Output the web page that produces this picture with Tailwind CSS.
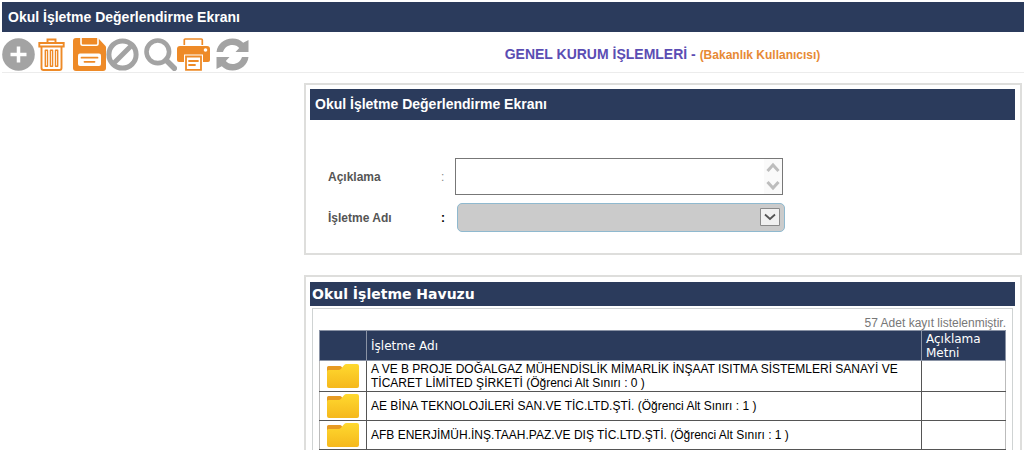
<!DOCTYPE html>
<html lang="tr">
<head>
<meta charset="utf-8">
<meta name="viewport" content="width=device-width, initial-scale=1">
<title>Okul İşletme Değerlendirme Ekranı</title>
<script src="https://cdn.jsdelivr.net/npm/@tailwindcss/browser@4"></script>
</head>
<body class="flex min-h-screen flex-col bg-white font-['Liberation_Sans',Arial,sans-serif] text-black">
<svg class="absolute size-0" aria-hidden="true">
  <linearGradient id="folder-fill" x1="0" y1="0" x2="0" y2="1">
    <stop offset="0" stop-color="#ffd92f"/><stop offset="1" stop-color="#f5b81c"/>
  </linearGradient>
  <symbol id="folder" viewBox="0 0 32 24">
    <path fill="#e79a22" d="M1.500 2H13q1 0 1.500.8L16 5v6H0V3.500Q0 2 1.500 2Z"/>
    <path fill="url(#folder-fill)" d="M0 7.500Q0 6 1.500 6H11.500q1.500 0 2.500-1.200L17 1.300Q18 0 19.500 0H30q2 0 2 2v20q0 2-2 2H2q-2 0-2-2Z"/>
  </symbol>
</svg>

<header class="mt-[2px] ml-[2px] flex h-[30px] items-center bg-[#2b3b5c] pl-[6px]">
  <h1 class="text-[14px] font-bold text-white">Okul İşletme Değerlendirme Ekranı</h1>
</header>

<div class="ml-[2px] flex h-[41px] items-center border-b border-[#ececec]">
  <div class="flex w-[302px] shrink-0 items-center pt-[4px]" role="toolbar" aria-label="İşlemler">
    <button type="button" aria-label="Yeni" class="mr-[3px]">
      <svg class="size-[33px]" viewBox="0 0 33 33"><circle cx="16.500" cy="16.500" r="16.300" fill="#a3a3a3"/><path d="M16.500 8.500v16M8.500 16.500h16" stroke="#fff" stroke-width="3.500"/></svg>
    </button>
    <button type="button" aria-label="Sil" class="mr-[8px]">
      <svg class="h-[33px] w-[27px]" viewBox="0 0 27 33" fill="none" stroke="#ee8a27"><path stroke-width="1.900" d="M9.500 5V1.500h8V5M1.300 5h24.400v3.500H1.300ZM3.500 8.500h20V30q0 2-2 2h-16q-2 0-2-2Z"/><path stroke-width="1.400" stroke-linejoin="round" d="M7.300 12.200h2.200v16H7.300ZM12.400 12.200h2.200v16h-2.200ZM17.500 12.200h2.200v16h-2.200Z"/></svg>
    </button>
    <button type="button" aria-label="Kaydet">
      <svg class="size-[33px]" viewBox="0 0 33 33"><path fill="#ee8a27" d="M3 0h22l8 8.500V30q0 3-3 3H3q-3 0-3-3V3q0-3 3-3Z"/><path fill="none" stroke="#fff" stroke-width="1.600" d="M8 0v5.500q0 1.700 1.700 1.700h13.600Q25 7.200 25 5.500V0"/><rect x="5" y="15.500" width="23" height="12.500" rx="2" fill="#fff"/><path d="M8.500 19.700h16M11.500 23.800h10" stroke="#ee8a27" stroke-width="1.800" stroke-linecap="round"/></svg>
    </button>
    <button type="button" aria-label="İptal" class="mr-[5px]">
      <svg class="size-[33px]" viewBox="0 0 33 33" fill="none" stroke="#a3a3a3" stroke-width="5"><circle cx="16.500" cy="16.500" r="13.600"/><path d="M26 7 7 26"/></svg>
    </button>
    <button type="button" aria-label="Ara">
      <svg class="size-[33px]" viewBox="0 0 33 33" fill="none" stroke="#a3a3a3"><circle cx="13.800" cy="13.800" r="11.300" stroke-width="4.600"/><path d="m22 22 8.300 8.300" stroke-width="5.500" stroke-linecap="round"/></svg>
    </button>
    <button type="button" aria-label="Yazdır" class="mr-[6px]">
      <svg class="size-[33px]" viewBox="0 0 33 33"><path fill="none" stroke="#ee8a27" stroke-width="1.700" d="M7.300 7V2q0-1 1-1h16q1 0 1 1v5"/><path fill="#ee8a27" d="M3 8h27q3 0 3 3v11q0 2-2 2H2q-2 0-2-2V11q0-3 3-3Z"/><circle cx="28.500" cy="12" r="1.800" fill="#fff"/><path fill="#fff" d="M7 16.500h19V33H7Z"/><path fill="none" stroke="#ee8a27" stroke-width="1.800" d="M9 18.500h15v13.300H9Z"/><path d="M12 23h9M12 27h6" stroke="#ee8a27" stroke-width="1.800" stroke-linecap="round"/></svg>
    </button>
    <button type="button" aria-label="Yenile">
      <svg class="size-[33px]" viewBox="0 0 33 33"><g fill="#a3a3a3"><path d="M.5 14C1.500 6 8 .5 16.500.5c4.500 0 8 1.500 10.700 4.300L32.500 2V14H19.500l3.700-4C21.500 8 19.500 7 16.500 7 12 7 8.500 9.500 7 14Z"/><path transform="rotate(180 16.500 16.500)" d="M.5 14C1.500 6 8 .5 16.500.5c4.500 0 8 1.500 10.700 4.300L32.500 2V14H19.500l3.700-4C21.500 8 19.500 7 16.500 7 12 7 8.500 9.500 7 14Z"/></g></svg>
    </button>
  </div>
  <p class="mr-[3px] flex-1 pt-[4px] text-center text-[14px] font-bold text-[#5b4db3]">GENEL KURUM İŞLEMLERİ - <span class="text-[12px] text-[#e78a35]">(Bakanlık Kullanıcısı)</span></p>
</div>

<main class="mr-[2px] ml-[304px] flex flex-1 flex-col gap-[20px] pt-[10px]">
  <section class="border-2 border-[#dededc] pt-[4px] pr-[5px] pb-[21px] pl-[4px]">
    <h2 class="flex h-[31px] items-center bg-[#2b3b5c] pl-[5px] text-[14px] font-bold text-white">Okul İşletme Değerlendirme Ekranı</h2>
    <form class="mt-[38px] ml-[18px] flex flex-col gap-[8px] text-[12px] font-bold text-[#555]">
      <div class="flex items-center">
        <label for="aciklama" class="w-[113px]">Açıklama</label>
        <span class="w-[14px] font-normal text-[#888]">:</span>
        <div class="relative h-[37px] w-[328px]">
          <textarea id="aciklama" class="block size-full resize-none overflow-hidden border border-[#777] pr-[18px] text-black outline-none"></textarea>
          <svg class="pointer-events-none absolute top-[1px] right-[1px] h-[35px] w-[18px] bg-[#fafafa]" viewBox="0 0 18 35" fill="none" stroke="#bdbdbd" stroke-width="3"><path d="m3.500 12 5.500-6 5.500 6M3.500 23 9 29l5.500-6"/></svg>
        </div>
      </div>
      <div class="flex items-center">
        <label for="isletme" class="w-[113px]">İşletme Adı</label>
        <span class="w-[16px] text-black">:</span>
        <div class="relative h-[29px] w-[328px]">
          <select id="isletme" class="block size-full appearance-none rounded-[5px] border border-[#8fb9cf] bg-[#cbcbcb] pl-2 text-black opacity-100 outline-none"><option></option></select>
          <svg class="pointer-events-none absolute top-[5px] right-[5px] h-[18px] w-[20px]" viewBox="0 0 20 18" fill="none"><path d="M.5.5h19v17H.5Z" fill="#f1f1f1" stroke="#8a8a8a"/><path d="m5 6.500 5 4.500 5-4.500" stroke="#555" stroke-width="1.800"/></svg>
        </div>
      </div>
    </form>
  </section>

  <section class="flex flex-1 flex-col border-2 border-b-0 border-[#dededc] pt-[5px] pr-[5px] pl-[4px]">
    <h2 class="flex h-[24px] items-center bg-[#2b3b5c] pl-[2px] font-['DejaVu_Sans',Verdana,sans-serif] text-[14px] font-bold text-white">Okul İşletme Havuzu</h2>
    <div class="mx-[2px] mt-[2px] flex-1 border border-b-0 border-[#cfd3d3] px-[6px] pt-[7px]">
      <p class="text-right text-[12px] leading-[14px] text-[#777]">57 Adet kayıt listelenmiştir.</p>
      <table class="w-full table-fixed border-collapse text-[12px] leading-[14px]" aria-label="Okul İşletme Havuzu">
        <colgroup><col class="w-[47px]"><col><col class="w-[84px]"></colgroup>
        <thead class="bg-[#2b3b5c] text-left font-['DejaVu_Sans',Verdana,sans-serif] text-[12px] text-white">
          <tr class="h-[30px]">
            <td class="border border-[#8a93a5] p-0"></td>
            <th scope="col" class="border border-[#8a93a5] p-0 pl-[4px] font-normal">İşletme Adı</th>
            <th scope="col" class="border border-[#8a93a5] p-0 pl-[4px] font-normal">Açıklama Metni</th>
          </tr>
        </thead>
        <tbody>
          <tr class="h-[31px]">
            <td class="border border-[#555] border-l-[#bbb] p-0"><button type="button" aria-label="Aç" class="mx-auto block"><svg class="h-[24px] w-[32px]"><use href="#folder"/></svg></button></td>
            <td class="border border-[#555] p-0 pl-[4px]">A VE B PROJE DOĞALGAZ MÜHENDİSLİK MİMARLİK İNŞAAT ISITMA SİSTEMLERİ SANAYİ VE TİCARET LİMİTED ŞİRKETİ (Öğrenci Alt Sınırı : 0 )</td>
            <td class="border border-[#555] border-r-[#bbb] p-0"></td>
          </tr>
          <tr class="h-[29px]">
            <td class="border border-[#555] border-l-[#bbb] p-0"><button type="button" aria-label="Aç" class="mx-auto block"><svg class="h-[24px] w-[32px]"><use href="#folder"/></svg></button></td>
            <td class="border border-[#555] p-0 pl-[4px]">AE BİNA TEKNOLOJİLERİ SAN.VE TİC.LTD.ŞTİ. (Öğrenci Alt Sınırı : 1 )</td>
            <td class="border border-[#555] border-r-[#bbb] p-0"></td>
          </tr>
          <tr class="h-[29px]">
            <td class="border border-[#555] border-l-[#bbb] p-0"><button type="button" aria-label="Aç" class="mx-auto block"><svg class="h-[24px] w-[32px]"><use href="#folder"/></svg></button></td>
            <td class="border border-[#555] p-0 pl-[4px]">AFB ENERJİMÜH.İNŞ.TAAH.PAZ.VE DIŞ TİC.LTD.ŞTİ. (Öğrenci Alt Sınırı : 1 )</td>
            <td class="border border-[#555] border-r-[#bbb] p-0"></td>
          </tr>
        </tbody>
      </table>
    </div>
  </section>
</main>
</body>
</html>
